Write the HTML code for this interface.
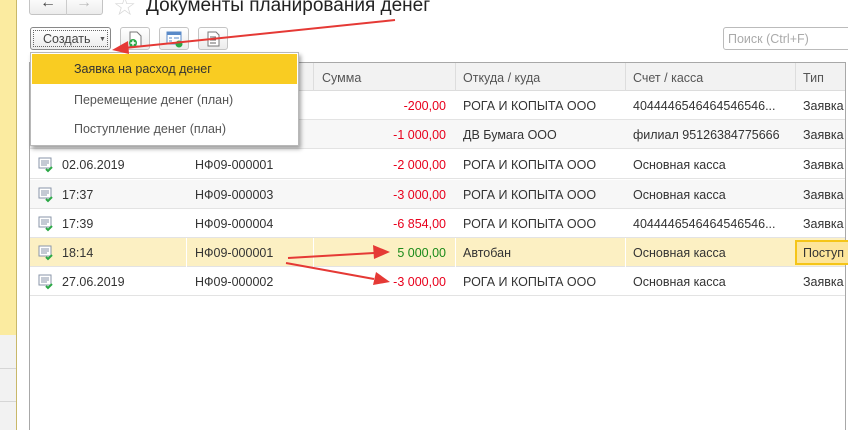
<!DOCTYPE html>
<html><head><meta charset="utf-8"><style>
*{margin:0;padding:0;box-sizing:border-box}
body{width:848px;height:430px;overflow:hidden;background:#fff;font-family:"Liberation Sans",Arial,sans-serif;font-size:12.5px;color:#333;position:relative}
.a{position:absolute}
.btn{position:absolute;border:1px solid #c4c4c4;border-radius:3px;background:linear-gradient(#fff,#ececec)}
.row{position:absolute;left:30px;width:815px;height:29px;border-bottom:1px solid #e3e3e3}
.row span{position:absolute;top:8px;white-space:nowrap}
.hd span{position:absolute;top:8px;color:#555}
.red{color:#e8001c}
</style></head><body>
<div class="a" style="left:0;top:0;width:16px;height:335px;background:#fbeba0"></div>
<div class="a" style="left:0;top:335px;width:16px;height:95px;background:#f2f2f2"></div>
<div class="a" style="left:0;top:368px;width:16px;height:1px;background:#d6d6d6"></div>
<div class="a" style="left:0;top:401px;width:16px;height:1px;background:#d6d6d6"></div>
<div class="a" style="left:16px;top:0;width:1px;height:430px;background:#c9b869"></div>
<div class="btn" style="left:29px;top:-5px;width:74px;height:20px"></div>
<div class="a" style="left:66px;top:-5px;width:1px;height:20px;background:#ccc"></div>
<div class="a" style="left:40px;top:-6px;font-size:16px;color:#444;font-weight:bold">&#8592;</div>
<div class="a" style="left:76px;top:-6px;font-size:16px;color:#bbb;font-weight:bold">&#8594;</div>
<div class="a" style="left:113px;top:-9px;font-size:26px;color:#d8d8d8">&#9734;</div>
<div class="a" style="left:146px;top:-5px;font-size:19px;color:#222">Документы планирования денег</div>
<div class="btn" style="left:30px;top:27px;width:81px;height:23px;border-color:#888"><div class="a" style="left:2px;top:2px;right:2px;bottom:2px;border:1px dotted #666"></div><span class="a" style="left:12px;top:4px;color:#444">Создать</span><span class="a" style="left:68px;top:8px;font-size:7px;color:#555">▼</span></div>
<div class="btn" style="left:120px;top:27px;width:30px;height:23px"><svg class="a" style="left:7px;top:3px" width="16" height="17"><path d="M2 1h7l4 4v10H2z" fill="#fff" stroke="#777"/><circle cx="5" cy="12" r="4" fill="#2aa845"/><path d="M5 9.5v5M2.5 12h5" stroke="#fff" stroke-width="1.5"/></svg></div>
<div class="btn" style="left:159px;top:27px;width:30px;height:23px"><svg class="a" style="left:6px;top:3px" width="18" height="17"><rect x="1" y="1" width="14" height="12" fill="#fff" stroke="#5a8ac8"/><rect x="1" y="1" width="14" height="3" fill="#5a8ac8"/><path d="M3 7h3M8 7h5M3 10h3" stroke="#5a8ac8"/><circle cx="13" cy="13" r="3.5" fill="#2aa845"/></svg></div>
<div class="btn" style="left:198px;top:27px;width:30px;height:23px"><svg class="a" style="left:8px;top:3px" width="14" height="16"><path d="M1 1h8l3 3v11H1z" fill="#fff" stroke="#777"/><path d="M3 6h6M3 9h6M3 12h6" stroke="#666"/></svg></div>
<div class="a" style="left:723px;top:27px;width:130px;height:23px;border:1px solid #bbb;border-radius:3px;color:#aaa;padding:4px 0 0 4px">Поиск (Ctrl+F)</div>
<div class="a" style="left:29px;top:62px;width:1px;height:368px;background:#a8a8a8"></div>
<div class="a" style="left:845px;top:62px;width:1px;height:368px;background:#a8a8a8"></div>
<div class="a" style="left:29px;top:62px;width:817px;height:1px;background:#a8a8a8"></div>
<div class="a hd" style="left:30px;top:63px;width:815px;height:28px;background:#f2f2f2;border-bottom:1px solid #dcdcdc">
<div class="a" style="left:283px;top:0;width:1px;height:28px;background:#ddd"></div>
<div class="a" style="left:425px;top:0;width:1px;height:28px;background:#ddd"></div>
<div class="a" style="left:595px;top:0;width:1px;height:28px;background:#ddd"></div>
<div class="a" style="left:765px;top:0;width:1px;height:28px;background:#ddd"></div>
<span style="left:292px">Сумма</span><span style="left:433px">Откуда / куда</span><span style="left:603px">Счет / касса</span><span style="left:773px">Тип</span></div>

<div class="row" style="top:91px"><span class="red" style="right:399px">-200,00</span><span style="left:433px">РОГА И КОПЫТА ООО</span><span style="left:603px">4044446546464546546...</span><span style="left:773px">Заявка</span></div>
<div class="row" style="top:120px;background:#f7f7f7"><span class="red" style="right:399px">-1 000,00</span><span style="left:433px">ДВ Бумага ООО</span><span style="left:603px">филиал 95126384775666</span><span style="left:773px">Заявка</span></div>
<div class="row" style="top:150px"><span style="left:32px">02.06.2019</span><span style="left:165px">НФ09-000001</span><span class="red" style="right:399px">-2 000,00</span><span style="left:433px">РОГА И КОПЫТА ООО</span><span style="left:603px">Основная касса</span><span style="left:773px">Заявка</span></div>
<div class="row" style="top:180px;background:#f7f7f7"><span style="left:32px">17:37</span><span style="left:165px">НФ09-000003</span><span class="red" style="right:399px">-3 000,00</span><span style="left:433px">РОГА И КОПЫТА ООО</span><span style="left:603px">Основная касса</span><span style="left:773px">Заявка</span></div>
<div class="row" style="top:209px"><span style="left:32px">17:39</span><span style="left:165px">НФ09-000004</span><span class="red" style="right:399px">-6 854,00</span><span style="left:433px">РОГА И КОПЫТА ООО</span><span style="left:603px">4044446546464546546...</span><span style="left:773px">Заявка</span></div>
<div class="row" style="top:238px;background:#fcf0c3"><div class="a" style="left:156px;top:0;width:1px;height:29px;background:#fff"></div><div class="a" style="left:283px;top:0;width:1px;height:29px;background:#fff"></div><div class="a" style="left:425px;top:0;width:1px;height:29px;background:#fff"></div><div class="a" style="left:595px;top:0;width:1px;height:29px;background:#fff"></div>
<span style="left:32px">18:14</span><span style="left:165px">НФ09-000001</span><span style="right:399px;color:#1a8a1a">5 000,00</span><span style="left:433px">Автобан</span><span style="left:603px">Основная касса</span>
<div class="a" style="left:765px;top:2px;width:60px;height:25px;border:2px solid #f5c518;background:#fde59a;padding:4px 0 0 6px;white-space:nowrap;overflow:hidden">Поступ</div></div>
<div class="row" style="top:267px"><span style="left:32px">27.06.2019</span><span style="left:165px">НФ09-000002</span><span class="red" style="right:399px">-3 000,00</span><span style="left:433px">РОГА И КОПЫТА ООО</span><span style="left:603px">Основная касса</span><span style="left:773px">Заявка</span></div>

<svg class="a" style="left:38px;top:157px" width="16" height="140">
<g id="i"><rect x="1" y="1" width="12" height="10" fill="#fff" stroke="#8a96a8"/><path d="M3 4h8M3 6h8M3 8h6" stroke="#8a96a8"/><path d="M8 12l2 2 4-4" stroke="#2aa845" stroke-width="2" fill="none"/></g>
<use href="#i" y="30"/><use href="#i" y="59"/><use href="#i" y="88"/><use href="#i" y="117"/>
</svg>

<div class="a" style="left:30px;top:52px;width:269px;height:94px;background:#fff;border:1px solid #b8b8b8;box-shadow:2px 3px 4px rgba(0,0,0,.35)">
<div class="a" style="left:1px;top:1px;width:265px;height:30px;background:#f9cc22"></div>
<span class="a" style="left:43px;top:9px;color:#333">Заявка на расход денег</span>
<span class="a" style="left:43px;top:40px;color:#555">Перемещение денег (план)</span>
<span class="a" style="left:43px;top:69px;color:#555">Поступление денег (план)</span>
</div>

<svg class="a" style="left:0;top:0" width="848" height="430">
<g stroke="#e53935" stroke-width="2" fill="#e53935">
<line x1="395" y1="20" x2="125" y2="48"/><path d="M112 50l16-9 1 13z" stroke="none"/>
<line x1="288" y1="258" x2="374" y2="253"/><path d="M390 252l-17-7 1 14z" stroke="none"/>
<line x1="286" y1="263" x2="374" y2="279"/><path d="M390 282l-14-10-3 13z" stroke="none"/>
</g></svg>
</body></html>
